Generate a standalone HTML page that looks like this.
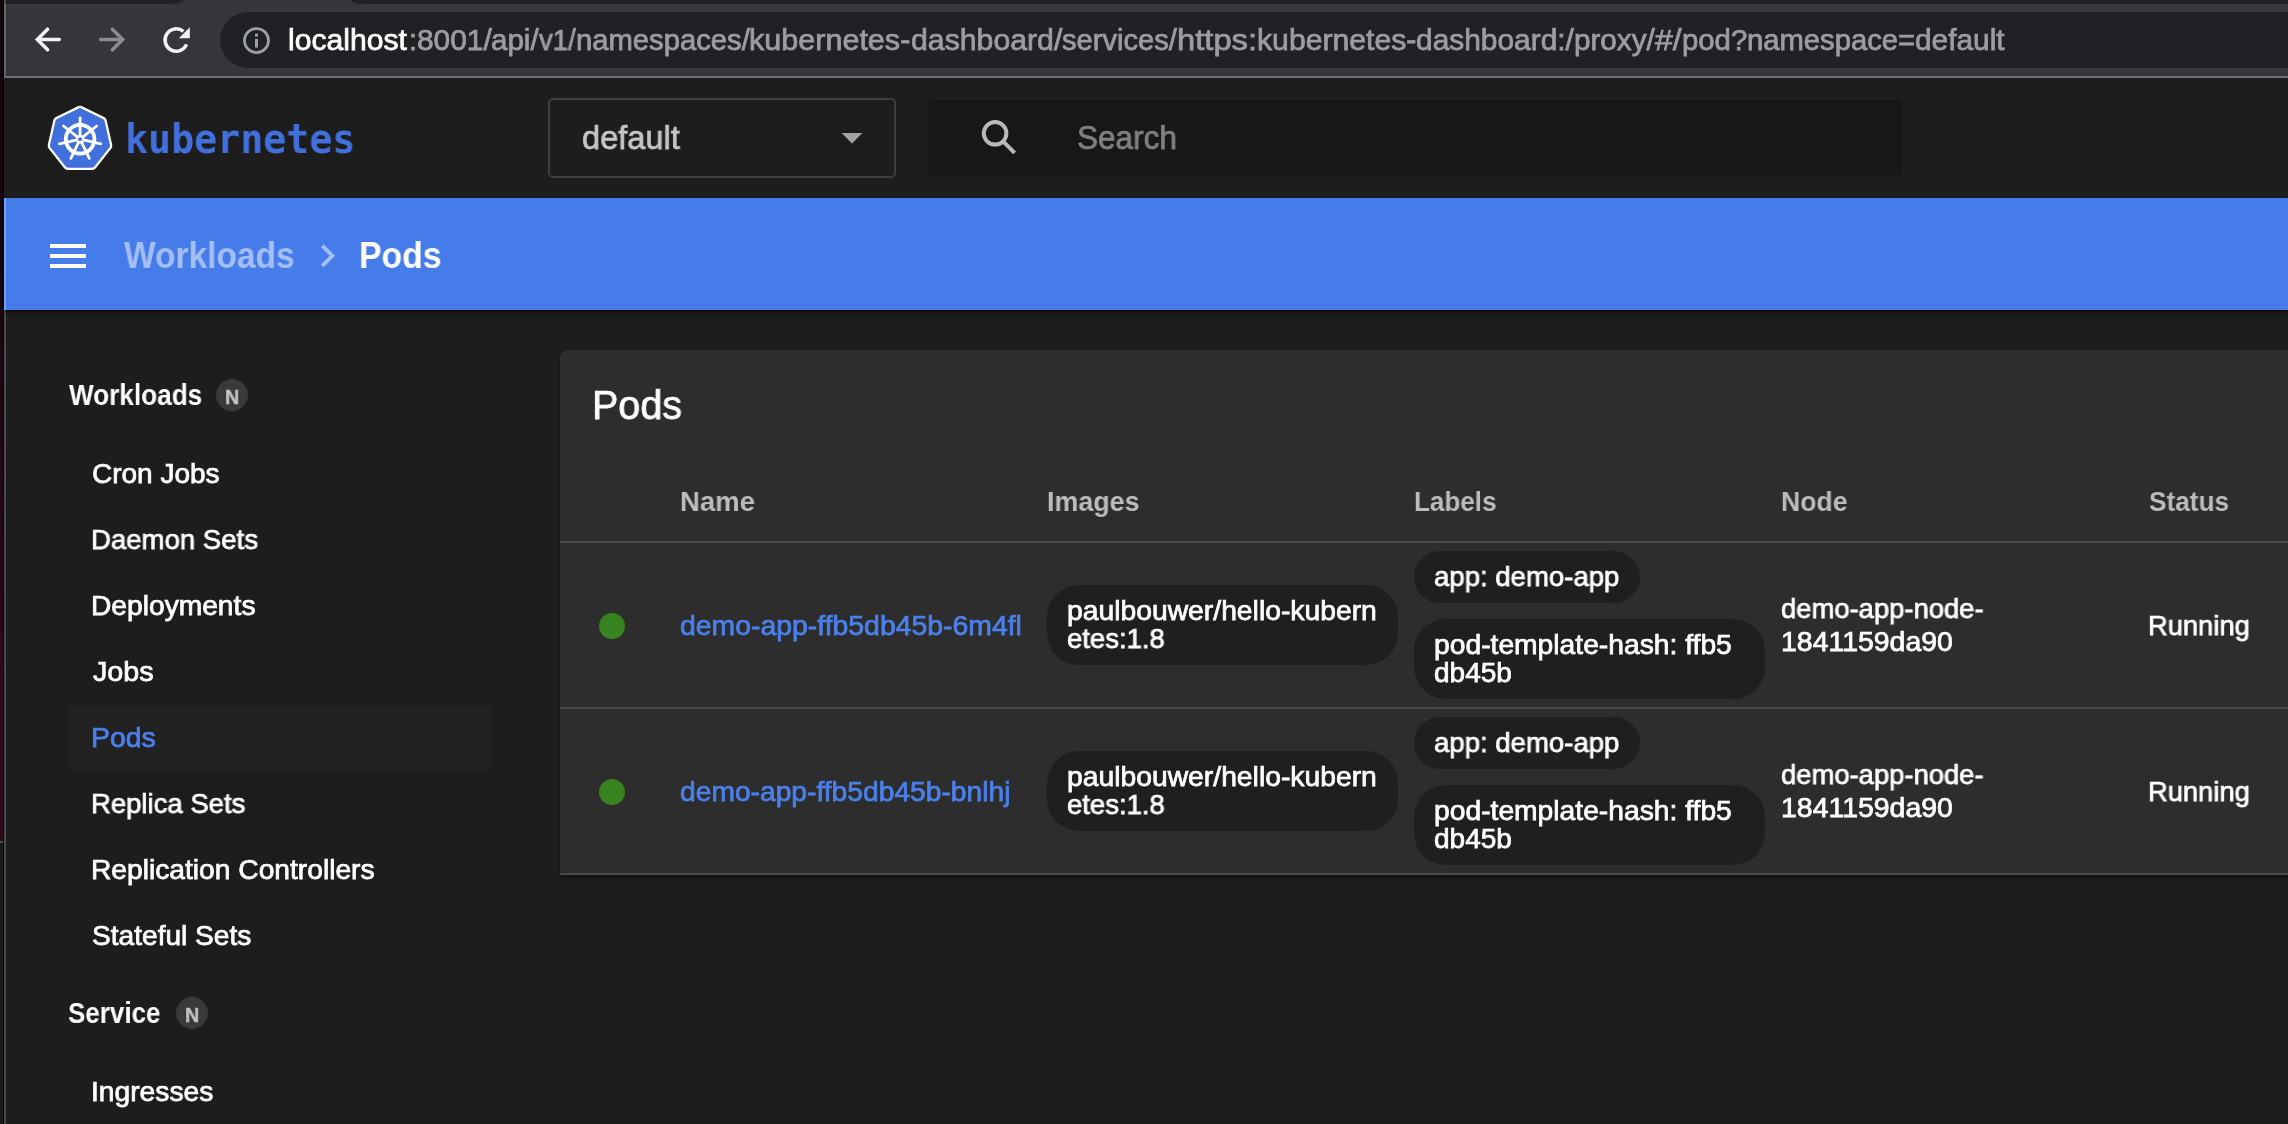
<!DOCTYPE html>
<html lang="en">
<head>
<meta charset="utf-8">
<title>Kubernetes Dashboard - Pods</title>
<style>
*{box-sizing:border-box;margin:0;padding:0}
html,body{width:2288px;height:1124px;overflow:hidden;background:#1d1d1d}
body{position:relative;font-family:"Liberation Sans",sans-serif;color:#fff}
.abs,.t,svg.i{position:absolute}
.t{will-change:transform;display:inline-block;white-space:nowrap;line-height:1;transform-origin:0 0;text-decoration:none}
/* window edge */
.edge-a{left:0;top:0;width:3px;height:841px;background:linear-gradient(#13040c 0,#1a0611 300px,#2e0a1d 700px,#300a1e 841px)}
.edge-b{left:0;top:841px;width:3px;height:2px;background:#4a4a4a}
.edge-c{left:0;top:843px;width:3px;height:281px;background:#1b1b1b}
.edge-k{left:3px;top:0;width:1px;height:1124px;background:#000}
.edge-g{left:4px;top:0;width:2px;height:1124px;background:#4b4b4b}
/* browser toolbar */
.toolbar{left:6px;top:0;right:0;height:76px;background:#35363a}
.toolbar-sep{left:4px;top:76px;right:0;height:2px;background:#6f7073}
.edge-gt{left:4px;top:0;width:2px;height:76px;background:linear-gradient(#4c4c4e 0,#4c4c4e 4px,#65666a 4px)}
.tab1{left:6px;top:0;width:177px;height:4px;background:#202124;border-radius:0 0 14px 0/0 0 4px 0}
.tab2{left:351px;top:0;right:0;height:4px;background:#202124;border-radius:0 0 0 14px/0 0 0 4px}
.omni{left:220px;top:12px;width:2200px;height:56px;border-radius:28px;background:#202124}
/* app header */
.hdr{left:4px;top:78px;right:0;height:120px;background:#1d1d1d}
.nsbox{left:548px;top:98px;width:348px;height:80px;border:2px solid #3d3d3d;border-radius:5px}
.search{left:928px;top:100px;width:974px;height:77px;border-radius:5px;background:#171717}
/* breadcrumb bar */
.crumbs{left:4px;top:198px;right:0;height:112px;background:#467cea;box-shadow:0 1px 2px rgba(0,0,0,.7),0 3px 5px rgba(0,0,0,.25)}
.crumbs i{position:absolute;left:0;top:0;width:2px;height:100%;background:#74a0f8}
.bar{left:50px;width:36px;height:4px;background:#fff}
/* sidebar */
.sel{left:68px;top:706px;width:424px;height:64px;border-radius:3px;background:#222}
.badge{width:32px;height:32px;border-radius:50%;background:#3a3a3a}
/* card */
.card{left:560px;top:350px;width:1800px;height:525px;border-radius:8px 0 0 2px;background:#2d2d2d;box-shadow:0 2px 3px rgba(0,0,0,.45)}
.hr{left:560px;width:1728px;height:2px;background:#4a4a4a}
.dot{width:26px;height:26px;border-radius:50%;background:#37831f}
.chipbg{background:#1f1f1f;border-radius:32px}
</style>
</head>
<body>
<!-- desktop / window edge strip -->
<div class="abs edge-a"></div><div class="abs edge-b"></div><div class="abs edge-c"></div>
<div class="abs edge-k"></div><div class="abs edge-g"></div>

<!-- browser chrome -->
<div class="browser">
<div class="abs toolbar"></div>
<div class="abs edge-gt"></div>
<div class="abs tab1"></div><div class="abs tab2"></div>
<div class="abs toolbar-sep"></div>
<svg class="i" style="left:30px;top:20px" width="180" height="40" viewBox="30 20 180 40" fill="none" stroke-width="3.5" stroke-linecap="round" stroke-linejoin="miter">
  <g stroke="#f1f3f4"><path d="M59.3 39.5H38"/><path d="M47.6 29.2 37.3 39.5 47.6 49.8"/></g>
  <g stroke="#8b8c8f"><path d="M100.7 39.5H122"/><path d="M112.4 29.2 122.7 39.5 112.4 49.8"/></g>
  <g stroke="#f1f3f4"><path d="M186.6 44.4A11.2 11.2 0 1 1 183.4 31.4" stroke-linecap="butt"/><path d="M189.8 27.2v11h-11z" fill="#f1f3f4" stroke="none"/></g>
</svg>
<div class="abs omni"></div>
<svg class="i" style="left:240px;top:24px" width="34" height="34" viewBox="240 24 34 34" fill="none">
  <circle cx="256.5" cy="40.6" r="12" stroke="#9aa0a6" stroke-width="2.8"/>
  <rect x="255" y="39" width="3" height="8.6" fill="#9aa0a6"/><rect x="255" y="33.6" width="3" height="3" fill="#9aa0a6"/>
</svg>
<span class="t url" style="left:287.85px;top:26px;transform:scaleX(1.0381);font-size:29px;color:#ffffff;-webkit-text-stroke:0.75px #ffffff;">localhost</span>
<span class="t url" style="left:408.69px;top:26px;transform:scaleX(0.9919);font-size:29px;color:#9c9da1;-webkit-text-stroke:0.75px #9c9da1;">:</span>
<span class="t url" style="left:416.66px;top:26px;transform:scaleX(1.0307);font-size:29px;color:#9c9da1;-webkit-text-stroke:0.75px #9c9da1;">8001/</span>
<span class="t url" style="left:491.46px;top:26px;transform:scaleX(1.0184);font-size:29px;color:#9c9da1;-webkit-text-stroke:0.75px #9c9da1;">api/</span>
<span class="t url" style="left:539.06px;top:26px;transform:scaleX(0.9474);font-size:29px;color:#9c9da1;-webkit-text-stroke:0.75px #9c9da1;">v1/</span>
<span class="t url" style="left:575.67px;top:26px;transform:scaleX(1.0076);font-size:29px;color:#9c9da1;-webkit-text-stroke:0.75px #9c9da1;">namespaces/</span>
<span class="t url" style="left:749.44px;top:26px;transform:scaleX(1.0533);font-size:29px;color:#9c9da1;-webkit-text-stroke:0.75px #9c9da1;">kubernetes-</span>
<span class="t url" style="left:910.75px;top:26px;transform:scaleX(1.0429);font-size:29px;color:#9c9da1;-webkit-text-stroke:0.75px #9c9da1;">dashboard/</span>
<span class="t url" style="left:1062.08px;top:26px;transform:scaleX(1.0042);font-size:29px;color:#9c9da1;-webkit-text-stroke:0.75px #9c9da1;">services/</span>
<span class="t url" style="left:1176.77px;top:26px;transform:scaleX(1.1283);font-size:29px;color:#9c9da1;-webkit-text-stroke:0.75px #9c9da1;">https:</span>
<span class="t url" style="left:1256.85px;top:26px;transform:scaleX(1.0409);font-size:29px;color:#9c9da1;-webkit-text-stroke:0.75px #9c9da1;">kubernetes-</span>
<span class="t url" style="left:1416.26px;top:26px;transform:scaleX(1.0309);font-size:29px;color:#9c9da1;-webkit-text-stroke:0.75px #9c9da1;">dashboard:/</span>
<span class="t url" style="left:1574.16px;top:26px;transform:scaleX(1.0222);font-size:29px;color:#9c9da1;-webkit-text-stroke:0.75px #9c9da1;">proxy/</span>
<span class="t url" style="left:1654.91px;top:26px;transform:scaleX(1.0998);font-size:29px;color:#9c9da1;-webkit-text-stroke:0.75px #9c9da1;">#/</span>
<span class="t url" style="left:1681.57px;top:26px;transform:scaleX(1.0106);font-size:29px;color:#9c9da1;-webkit-text-stroke:0.75px #9c9da1;">pod?</span>
<span class="t url" style="left:1746.77px;top:26px;transform:scaleX(1.0074);font-size:29px;color:#9c9da1;-webkit-text-stroke:0.75px #9c9da1;">namespace=</span>
<span class="t url" style="left:1914.86px;top:26px;transform:scaleX(1.0292);font-size:29px;color:#9c9da1;-webkit-text-stroke:0.75px #9c9da1;">default</span>
</div>

<!-- application header -->
<header>
<div class="abs hdr"></div>
<svg class="i" style="left:44px;top:102px" width="72" height="72" viewBox="44 102 72 72">
  <path d="M80 110.8 102.3 121.5 107.8 145.6 92.4 165H67.6L52.2 145.6 57.7 121.5z" fill="#fff" stroke="#fff" stroke-width="10" stroke-linejoin="round" transform="translate(80 0) scale(.985 1) translate(-80 0)"/>
  <path d="M80 111.1 102 121.7 107.5 145.6 92.2 164.7H67.8L52.5 145.6 58 121.7z" fill="#4170dc" stroke="#4170dc" stroke-width="6" stroke-linejoin="round" transform="translate(80 0) scale(.985 1) translate(-80 0)"/>
  <g stroke="#fff" fill="none" stroke-linecap="round">
    <circle cx="80.1" cy="139.2" r="14.3" stroke-width="3.8"/>
    <g stroke-width="2.8">
      <path d="M80.1 139.2V118"/><path d="M80.1 139.2 96.7 126"/><path d="M80.1 139.2 100.8 143.9"/>
      <path d="M80.1 139.2 89.3 158.3"/><path d="M80.1 139.2 70.9 158.3"/><path d="M80.1 139.2 59.4 143.9"/><path d="M80.1 139.2 63.5 126"/>
    </g>
  </g>
  <circle cx="80.1" cy="139.2" r="4.3" fill="#fff"/><circle cx="80.1" cy="139.2" r="1.9" fill="#4170dc"/>
</svg>
<div class="abs nsbox"></div>
<svg class="i" style="left:840px;top:130px" width="24" height="16" viewBox="840 130 24 16"><path d="M841.6 133h20.8L852 143.6z" fill="#a3a3a3"/></svg>
<div class="abs search"></div>
<svg class="i" style="left:978px;top:116px" width="42" height="42" viewBox="978 116 42 42" fill="none" stroke="#b9b9b9" stroke-width="4">
  <circle cx="995.1" cy="133.3" r="11.3"/><path d="M1003.4 141.6 1014.6 152.8"/>
</svg>
<span class="t brand" style="left:124.93px;top:119px;transform:scaleX(0.9564);font-size:40px;color:#4170dc;font-family:'DejaVu Sans Mono',monospace;font-weight:700;">kubernetes</span>
<span class="t ns" style="left:582.40px;top:120px;transform:scaleX(0.9572);font-size:34px;color:#c6c6c6;-webkit-text-stroke:0.75px #c6c6c6;">default</span>
<span class="t ph" style="left:1076.70px;top:121px;transform:scaleX(0.9548);font-size:33px;color:#808080;-webkit-text-stroke:0.75px #808080;">Search</span>
</header>

<!-- breadcrumb / action bar -->
<div class="actionbar">
<div class="abs crumbs"><i></i></div>
<div class="abs bar" style="top:244px"></div><div class="abs bar" style="top:254px"></div><div class="abs bar" style="top:264px"></div>
<svg class="i" style="left:316px;top:240px" width="24" height="32" viewBox="316 240 24 32" fill="none" stroke="#a5bef6" stroke-width="3.8"><path d="M322.3 245.6 332.4 255.7 322.3 265.8"/></svg>
<span class="t bc1" style="left:124.40px;top:238px;transform:scaleX(0.9312);font-size:36px;color:#a5bef6;font-weight:700;">Workloads</span>
<span class="t bc2" style="left:358.92px;top:238px;transform:scaleX(0.9377);font-size:36px;color:#ffffff;font-weight:700;">Pods</span>
</div>

<!-- navigation -->
<nav>
<div class="abs sel"></div>
<div class="abs badge" style="left:216px;top:379px"></div>
<div class="abs badge" style="left:176px;top:997px"></div>
<span class="t grp" style="left:68.50px;top:381px;transform:scaleX(0.9018);font-size:29px;color:#ffffff;font-weight:700;">Workloads</span>
<span class="t grp" style="left:68.30px;top:999px;transform:scaleX(0.8955);font-size:29px;color:#ffffff;font-weight:700;">Service</span>
<span class="t item" style="left:91.98px;top:460px;transform:scaleX(0.9963);font-size:28px;color:#ffffff;-webkit-text-stroke:0.75px #ffffff;">Cron Jobs</span>
<span class="t item" style="left:91.00px;top:526px;transform:scaleX(0.9845);font-size:28px;color:#ffffff;-webkit-text-stroke:0.75px #ffffff;">Daemon Sets</span>
<span class="t item" style="left:90.96px;top:592px;transform:scaleX(1.0065);font-size:28px;color:#ffffff;-webkit-text-stroke:0.75px #ffffff;">Deployments</span>
<span class="t item" style="left:92.98px;top:658px;transform:scaleX(1.0256);font-size:28px;color:#ffffff;-webkit-text-stroke:0.75px #ffffff;">Jobs</span>
<span class="t item" style="left:90.95px;top:724px;transform:scaleX(1.0151);font-size:28px;color:#4a80ec;-webkit-text-stroke:0.75px #4a80ec;">Pods</span>
<span class="t item" style="left:91.00px;top:790px;transform:scaleX(0.9817);font-size:28px;color:#ffffff;-webkit-text-stroke:0.75px #ffffff;">Replica Sets</span>
<span class="t item" style="left:90.96px;top:856px;transform:scaleX(1.0067);font-size:28px;color:#ffffff;-webkit-text-stroke:0.75px #ffffff;">Replication Controllers</span>
<span class="t item" style="left:91.97px;top:922px;transform:scaleX(1.0038);font-size:28px;color:#ffffff;-webkit-text-stroke:0.75px #ffffff;">Stateful Sets</span>
<span class="t n" style="left:224.95px;top:386px;transform:scaleX(0.9403);font-size:21px;color:#c4c4c4;font-weight:700;-webkit-text-stroke:0.4px #c4c4c4;">N</span>
<span class="t n" style="left:184.95px;top:1004px;transform:scaleX(0.9403);font-size:21px;color:#c4c4c4;font-weight:700;-webkit-text-stroke:0.4px #c4c4c4;">N</span>
<span class="t item" style="left:90.96px;top:1078px;transform:scaleX(1.0072);font-size:28px;color:#ffffff;-webkit-text-stroke:0.75px #ffffff;">Ingresses</span>
</nav>

<!-- content -->
<main>
<div class="abs card"></div>
<div class="abs hr" style="top:541px"></div>
<div class="abs hr" style="top:707px"></div>
<div class="abs hr" style="top:873px"></div>
<div class="abs dot" style="left:599px;top:613px"></div>
<div class="abs dot" style="left:599px;top:779px"></div>
<div class="abs chipbg" style="left:1047px;top:585px;width:351px;height:80px"></div>
<div class="abs chipbg" style="left:1414px;top:551px;width:226px;height:52px"></div>
<div class="abs chipbg" style="left:1414px;top:619px;width:351px;height:80px"></div>
<div class="abs chipbg" style="left:1047px;top:751px;width:351px;height:80px"></div>
<div class="abs chipbg" style="left:1414px;top:717px;width:226px;height:52px"></div>
<div class="abs chipbg" style="left:1414px;top:785px;width:351px;height:80px"></div>
<span class="t title" style="left:591.87px;top:385px;transform:scaleX(0.9625);font-size:41px;color:#ffffff;-webkit-text-stroke:0.75px #ffffff;">Pods</span>
<span class="t th" style="left:680.02px;top:488px;transform:scaleX(0.9827);font-size:28px;color:#bcbcbc;font-weight:700;">Name</span>
<span class="t th" style="left:1047.14px;top:488px;transform:scaleX(0.9587);font-size:28px;color:#bcbcbc;font-weight:700;">Images</span>
<span class="t th" style="left:1414.07px;top:488px;transform:scaleX(0.9296);font-size:28px;color:#bcbcbc;font-weight:700;">Labels</span>
<span class="t th" style="left:1781.05px;top:488px;transform:scaleX(0.9499);font-size:28px;color:#bcbcbc;font-weight:700;">Node</span>
<span class="t th" style="left:2148.50px;top:488px;transform:scaleX(0.9353);font-size:28px;color:#bcbcbc;font-weight:700;">Status</span>
<a class="t link" style="left:680.37px;top:612px;transform:scaleX(1.0137);font-size:28px;color:#4a80ec;-webkit-text-stroke:0.75px #4a80ec;">demo-app-ffb5db45b-6m4fl</a>
<span class="t chip" style="left:1067.37px;top:597px;transform:scaleX(1.0104);font-size:28px;color:#ffffff;-webkit-text-stroke:0.75px #ffffff;">paulbouwer/hello-kubern</span>
<span class="t chip" style="left:1067.39px;top:625px;transform:scaleX(0.9817);font-size:28px;color:#ffffff;-webkit-text-stroke:0.75px #ffffff;">etes:1.8</span>
<span class="t chip" style="left:1434.39px;top:563px;transform:scaleX(0.9838);font-size:28px;color:#ffffff;-webkit-text-stroke:0.75px #ffffff;">app: demo-app</span>
<span class="t chip" style="left:1434.37px;top:631px;transform:scaleX(1.0088);font-size:28px;color:#ffffff;-webkit-text-stroke:0.75px #ffffff;">pod-template-hash: ffb5</span>
<span class="t chip" style="left:1434.38px;top:659px;transform:scaleX(0.9995);font-size:28px;color:#ffffff;-webkit-text-stroke:0.75px #ffffff;">db45b</span>
<span class="t cell" style="left:1781.39px;top:595px;transform:scaleX(0.9785);font-size:28px;color:#ffffff;-webkit-text-stroke:0.75px #ffffff;">demo-app-node-</span>
<span class="t cell" style="left:1781.35px;top:628px;transform:scaleX(1.0156);font-size:28px;color:#ffffff;-webkit-text-stroke:0.75px #ffffff;">1841159da90</span>
<span class="t cell" style="left:2148.01px;top:612px;transform:scaleX(0.9756);font-size:28px;color:#ffffff;-webkit-text-stroke:0.75px #ffffff;">Running</span>
<a class="t link" style="left:680.37px;top:778px;transform:scaleX(1.0077);font-size:28px;color:#4a80ec;-webkit-text-stroke:0.75px #4a80ec;">demo-app-ffb5db45b-bnlhj</a>
<span class="t chip" style="left:1067.37px;top:763px;transform:scaleX(1.0104);font-size:28px;color:#ffffff;-webkit-text-stroke:0.75px #ffffff;">paulbouwer/hello-kubern</span>
<span class="t chip" style="left:1067.39px;top:791px;transform:scaleX(0.9817);font-size:28px;color:#ffffff;-webkit-text-stroke:0.75px #ffffff;">etes:1.8</span>
<span class="t chip" style="left:1434.39px;top:729px;transform:scaleX(0.9838);font-size:28px;color:#ffffff;-webkit-text-stroke:0.75px #ffffff;">app: demo-app</span>
<span class="t chip" style="left:1434.37px;top:797px;transform:scaleX(1.0088);font-size:28px;color:#ffffff;-webkit-text-stroke:0.75px #ffffff;">pod-template-hash: ffb5</span>
<span class="t chip" style="left:1434.38px;top:825px;transform:scaleX(0.9995);font-size:28px;color:#ffffff;-webkit-text-stroke:0.75px #ffffff;">db45b</span>
<span class="t cell" style="left:1781.39px;top:761px;transform:scaleX(0.9785);font-size:28px;color:#ffffff;-webkit-text-stroke:0.75px #ffffff;">demo-app-node-</span>
<span class="t cell" style="left:1781.35px;top:794px;transform:scaleX(1.0156);font-size:28px;color:#ffffff;-webkit-text-stroke:0.75px #ffffff;">1841159da90</span>
<span class="t cell" style="left:2148.01px;top:778px;transform:scaleX(0.9756);font-size:28px;color:#ffffff;-webkit-text-stroke:0.75px #ffffff;">Running</span>
</main>
</body>
</html>
